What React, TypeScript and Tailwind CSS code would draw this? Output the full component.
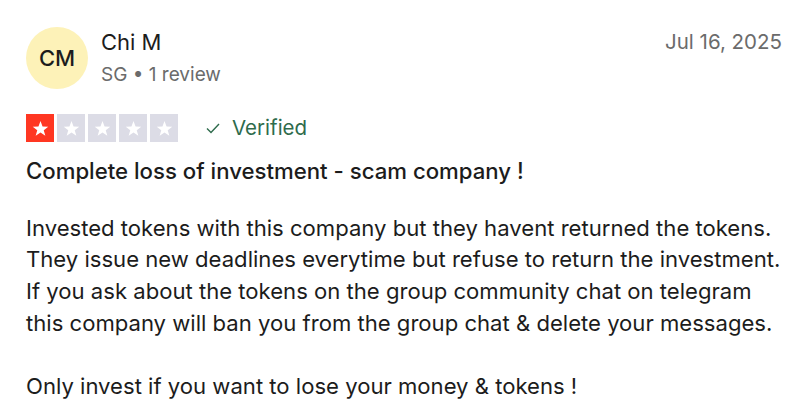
import React from "react";

function Star({ filled }: { filled: boolean }) {
  return (
    <div
      className={`w-[28px] h-[28px] flex items-center justify-center ${
        filled ? "bg-[#ff3722]" : "bg-[#dcdce6]"
      }`}
    >
      <svg viewBox="0 0 24 24" className="w-[19px] h-[19px]" fill="#ffffff">
        <path d="M12 2.5l2.6 6.9 7.2.3-5.7 4.5 2 7-6.1-4.1-6.1 4.1 2-7-5.7-4.5 7.2-.3z" />
      </svg>
    </div>
  );
}

export default function App() {
  const rating = 1;

  return (
    <div className="w-[800px] h-[419px] bg-white overflow-hidden font-['Inter',sans-serif] text-[#1c1c1c]">
      <div className="px-[26px] pt-[27px]">
        <div className="flex justify-between">
          <div className="flex gap-[13px]">
            <div className="w-[62px] h-[62px] rounded-full bg-[#fdf2b8] flex items-center justify-center text-[22px] font-medium">
              CM
            </div>
            <div className="flex flex-col">
              <p className="text-[22px] leading-[30px]">Chi M</p>
              <p className="text-[19px] leading-[26px] mt-[5px] text-[#6b6b6b]">SG • 1 review</p>
            </div>
          </div>
          <p className="text-[20.5px] leading-[30px] text-[#6b6b6b] mr-[-8px]">Jul 16, 2025</p>
        </div>

        <div className="flex items-center mt-[24px]">
          <div className="flex gap-[3px]">
            {[1, 2, 3, 4, 5].map((n) => (
              <Star key={n} filled={n <= rating} />
            ))}
          </div>
          <div className="flex items-center gap-[11px] ml-[27px] text-[#2e6b4c]">
            <svg viewBox="0 0 16 16" className="w-[16px] h-[16px]" fill="none" stroke="currentColor" strokeWidth="1.4">
              <path d="M2 8.5l4 4 8-8.5" />
            </svg>
            <span className="text-[20.5px]">Verified</span>
          </div>
        </div>

        <h2 className="text-[22.2px] font-medium mt-[12px] leading-[30px]">
          Complete loss of investment - scam company !
        </h2>

        <div className="text-[22.1px] leading-[31.6px] mt-[27px] whitespace-nowrap">
          <p>Invested tokens with this company but they havent returned the tokens.</p>
          <p>They issue new deadlines everytime but refuse to return the investment.</p>
          <p>If you ask about the tokens on the group community chat on telegram</p>
          <p>this company will ban you from the group chat &amp; delete your messages.</p>
          <p>&nbsp;</p>
          <p>Only invest if you want to lose your money &amp; tokens !</p>
        </div>
      </div>
    </div>
  );
}
